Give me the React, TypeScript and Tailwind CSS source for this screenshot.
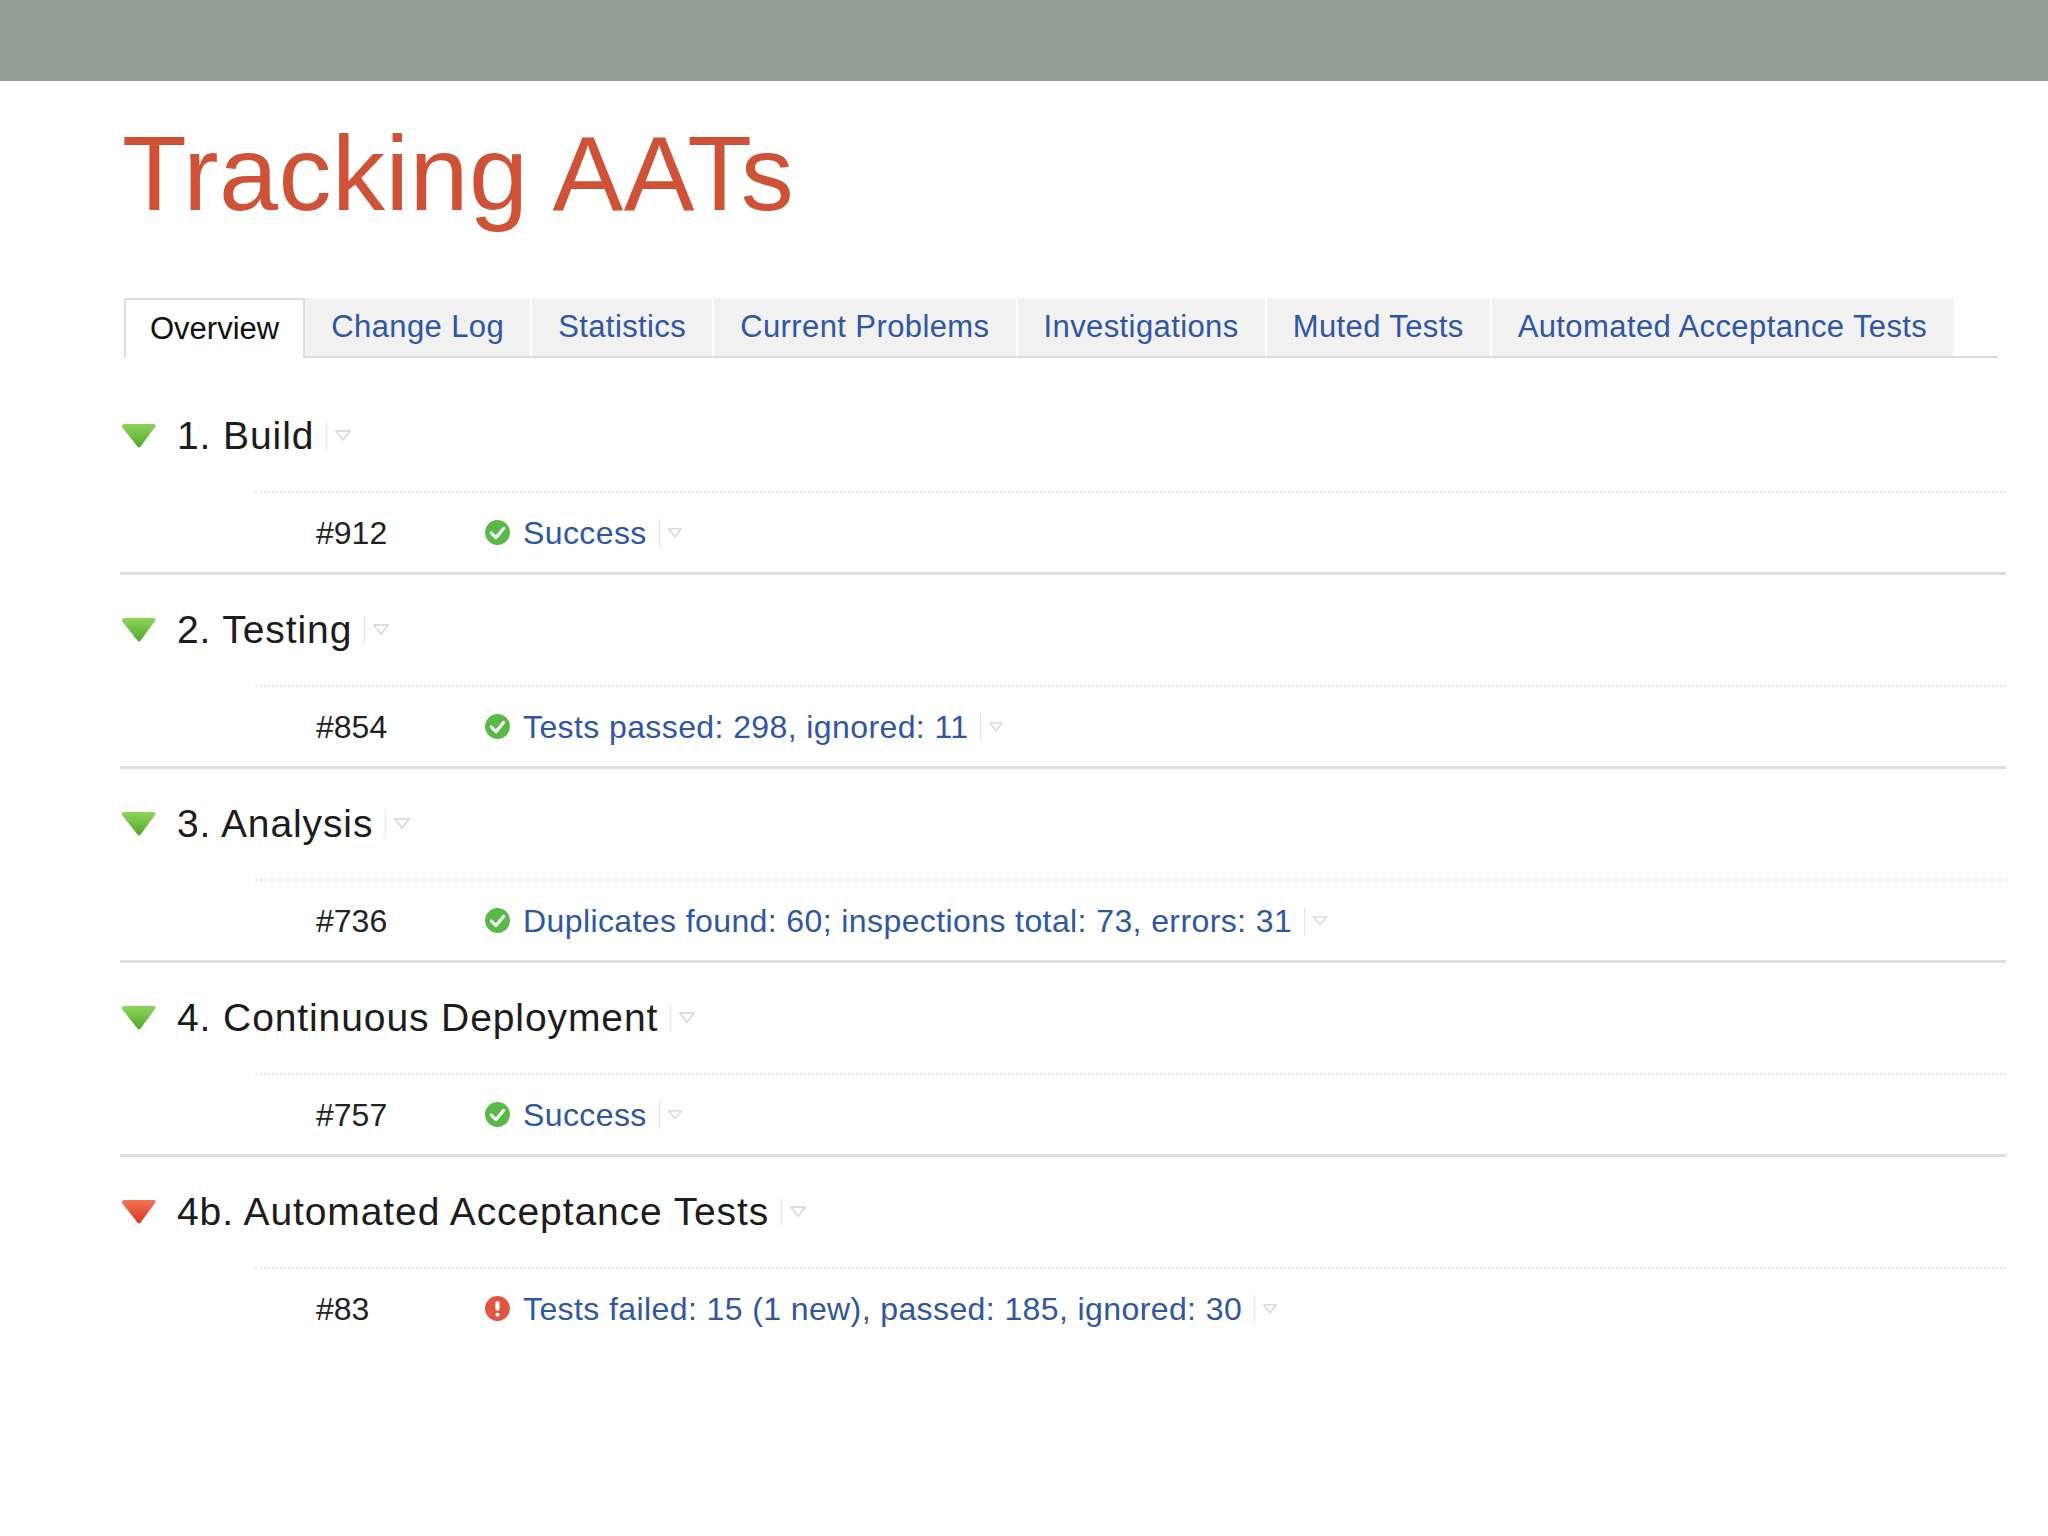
import React from 'react';

const tabs = ['Overview', 'Change Log', 'Statistics', 'Current Problems', 'Investigations', 'Muted Tests', 'Automated Acceptance Tests'];

const sections = [
  { title: '1. Build', build: '#912', status: 'Success', ok: true },
  { title: '2. Testing', build: '#854', status: 'Tests passed: 298, ignored: 11', ok: true },
  { title: '3. Analysis', build: '#736', status: 'Duplicates found: 60; inspections total: 73, errors: 31', ok: true },
  { title: '4. Continuous Deployment', build: '#757', status: 'Success', ok: true },
  { title: '4b. Automated Acceptance Tests', build: '#83', status: 'Tests failed: 15 (1 new), passed: 185, ignored: 30', ok: false },
];

function Caret({ size = 16 }: { size?: number }) {
  return (
    <span className="flex items-center gap-2 ml-3">
      <span className="w-px h-[28px] bg-[#e4e4e4]" />
      <svg width={size} height={size * 0.7} viewBox="0 0 16 11">
        <path d="M1 1 L15 1 L8 10 Z" fill="none" stroke="#d4d4d4" strokeWidth="1.5" />
      </svg>
    </span>
  );
}

function Triangle({ ok }: { ok: boolean }) {
  const id = ok ? 'g-ok' : 'g-bad';
  return (
    <svg width="38" height="26" viewBox="0 0 38 26">
      <defs>
        <linearGradient id={id} x1="0" y1="0" x2="0" y2="1">
          <stop offset="0" stopColor={ok ? '#8fd45a' : '#f2735a'} />
          <stop offset="1" stopColor={ok ? '#4fa82a' : '#d8371f'} />
        </linearGradient>
      </defs>
      <path d="M2 4 Q1 1 5 1 L33 1 Q37 1 35 4 L21 23 Q19 26 17 23 Z" fill={`url(#${id})`} />
    </svg>
  );
}

function StatusIcon({ ok }: { ok: boolean }) {
  return ok ? (
    <svg width="27" height="27" viewBox="0 0 26 26">
      <circle cx="13" cy="13" r="12" fill="#58b947" />
      <path d="M7 13.5 L11.5 18 L19 9" fill="none" stroke="#fff" strokeWidth="3" strokeLinecap="round" strokeLinejoin="round" />
    </svg>
  ) : (
    <svg width="27" height="27" viewBox="0 0 26 26">
      <circle cx="13" cy="13" r="12" fill="#e0553f" />
      <rect x="11" y="6" width="4" height="9" rx="1.5" fill="#fff" />
      <circle cx="13" cy="19" r="2" fill="#fff" />
    </svg>
  );
}

export default function App() {
  return (
    <div className="w-[2048px] h-[1536px] bg-white overflow-hidden" style={{ fontFamily: '"Liberation Sans", Arial, sans-serif' }}>
      <div className="h-[81px] bg-[#929f98]" />
      <div className="pl-[122px] pt-[34px] h-[217px]">
        <h1 className="text-[106px] leading-[1.1] text-[#cf5136] tracking-[0.5px]">Tracking AATs</h1>
      </div>

      {/* Tabs */}
      <div className="ml-[124px] mr-[50px] flex border-b-2 border-[#dcdcdc] h-[60px]">
        {tabs.map((t, i) => (
          <div
            key={t}
            className={
              i === 0
                ? 'px-[24px] flex items-center bg-white border-2 border-b-0 border-[#dcdcdc] -mb-[2px] text-[31px] text-[#111]'
                : 'px-[26px] flex items-center bg-[#f1f1f1] border-r-2 border-white text-[31px] text-[#2f56a3] tracking-[0.4px]'
            }
          >
            {t}
          </div>
        ))}
      </div>

      <div className="mt-[23px] ml-[120px] mr-[42px]">
        {sections.map((s, i) => (
          <div key={s.title} className={i < sections.length - 1 ? 'border-b-[3px] border-[#dedede]' : ''}>
            <div className="h-[110px] flex items-center">
              <Triangle ok={s.ok} />
              <span className="ml-[19px] text-[39px] text-[#1c1c1c] tracking-[0.9px]">{s.title}</span>
              <Caret />
            </div>
            <div className="ml-[135px] border-t-2 border-dotted border-[#e6e6e6] h-[81px] flex items-center">
              <span className="ml-[61px] w-[168px] text-[32px] text-[#222]">{s.build}</span>
              <StatusIcon ok={s.ok} />
              <span className="ml-[12px] text-[32px] text-[#2f56a3] tracking-[0.4px]">{s.status}</span>
              <Caret size={14} />
            </div>
          </div>
        ))}
      </div>
    </div>
  );
}
